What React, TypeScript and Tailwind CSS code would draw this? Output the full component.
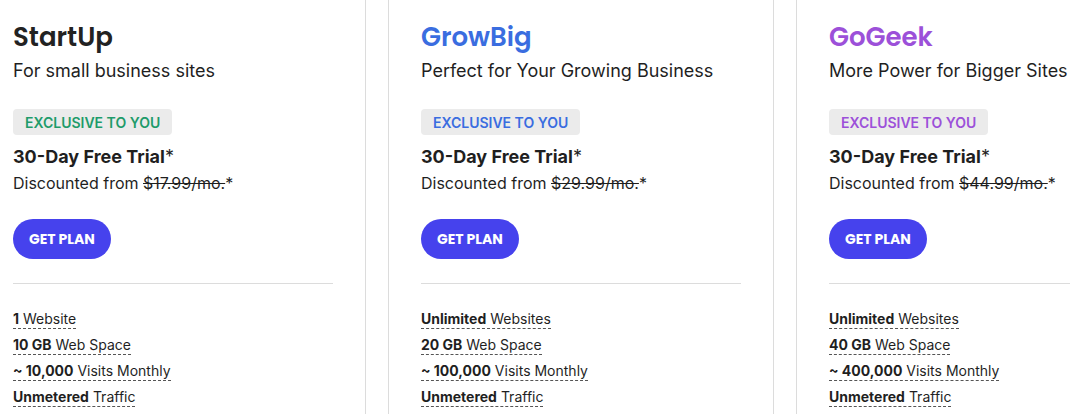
import React from "react"

type Feature = { strong: string; rest: string }

type Plan = {
  name: string
  tagline: string
  nameColor: string
  badgeColor: string
  oldPrice: string
  features: Feature[]
}

const plans: Plan[] = [
  {
    name: "StartUp",
    tagline: "For small business sites",
    nameColor: "text-[#222222]",
    badgeColor: "text-[#1e9b6a]",
    oldPrice: "$17.99/mo.",
    features: [
      { strong: "1", rest: "Website" },
      { strong: "10 GB", rest: "Web Space" },
      { strong: "~ 10,000", rest: "Visits Monthly" },
      { strong: "Unmetered", rest: "Traffic" },
    ],
  },
  {
    name: "GrowBig",
    tagline: "Perfect for Your Growing Business",
    nameColor: "text-[#3a6de0]",
    badgeColor: "text-[#3a6de0]",
    oldPrice: "$29.99/mo.",
    features: [
      { strong: "Unlimited", rest: "Websites" },
      { strong: "20 GB", rest: "Web Space" },
      { strong: "~ 100,000", rest: "Visits Monthly" },
      { strong: "Unmetered", rest: "Traffic" },
    ],
  },
  {
    name: "GoGeek",
    tagline: "More Power for Bigger Sites",
    nameColor: "text-[#9c50d9]",
    badgeColor: "text-[#9c50d9]",
    oldPrice: "$44.99/mo.",
    features: [
      { strong: "Unlimited", rest: "Websites" },
      { strong: "40 GB", rest: "Web Space" },
      { strong: "~ 400,000", rest: "Visits Monthly" },
      { strong: "Unmetered", rest: "Traffic" },
    ],
  },
]

function PlanCard({ plan }: { plan: Plan }) {
  return (
    <div className="w-[386px] shrink-0 border border-[#dcdcdc] px-[32px] pt-[59px] pb-[40px]">
      <h2
        className={`text-[26px] leading-[34px] font-semibold ${plan.nameColor}`}
        style={{ fontFamily: "Poppins, Lato, Inter, sans-serif" }}
      >
        {plan.name}
      </h2>
      <p className="mt-[3px] text-[18px] leading-[28px] text-[#1f1f1f]">{plan.tagline}</p>

      <div className="mt-[24px] inline-flex h-[26px] items-center rounded-[4px] bg-[#ebebeb] px-[12px]">
        <span className={`text-[14px] font-semibold ${plan.badgeColor}`}>EXCLUSIVE TO YOU</span>
      </div>

      <p className="mt-[10px] text-[18px] leading-[24px] font-bold text-[#1f1f1f]">
        30-Day Free Trial<span className="font-normal">*</span>
      </p>
      <p className="mt-[2px] text-[16px] leading-[24px] text-[#1f1f1f]">
        Discounted from <span className="line-through">{plan.oldPrice}</span>*
      </p>

      <button
        className="mt-[24px] h-[40px] rounded-full bg-[#4642ed] px-[16px] text-[14px] font-bold text-white"
        style={{ fontFamily: "Poppins, Lato, Inter, sans-serif" }}
      >
        GET PLAN
      </button>

      <div className="mt-[24px] border-t border-[#dcdcdc]" />

      <ul className="mt-[22px] flex flex-col gap-[6px]">
        {plan.features.map((f) => (
          <li key={f.strong + f.rest} className="h-[20px]">
            <span className="border-b border-dashed border-[#555] pb-[1px] text-[14px] leading-[20px] text-[#1f1f1f]">
              <span className="font-bold">{f.strong}</span> {f.rest}
            </span>
          </li>
        ))}
      </ul>
    </div>
  )
}

export default function App() {
  return (
    <div
      className="h-[414px] w-[1070px] overflow-hidden bg-white"
      style={{ fontFamily: "Inter, 'Noto Sans', sans-serif" }}
    >
      <div className="-mt-[40px] -ml-[20px] flex gap-[22px]">
        {plans.map((p) => (
          <PlanCard key={p.name} plan={p} />
        ))}
      </div>
    </div>
  )
}
